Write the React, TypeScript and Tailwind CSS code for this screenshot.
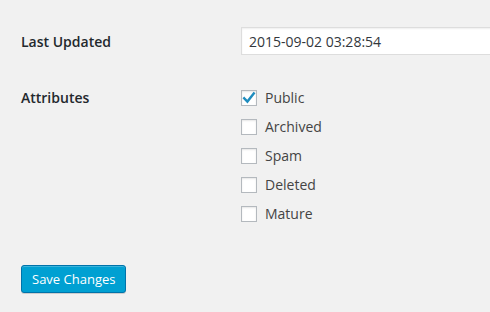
import { useState } from "react";

const attrs = [
  { name: "Public", checked: true },
  { name: "Archived", checked: false },
  { name: "Spam", checked: false },
  { name: "Deleted", checked: false },
  { name: "Mature", checked: false },
];

function Checkbox({ checked, onClick }: { checked: boolean; onClick: () => void }) {
  return (
    <span
      onClick={onClick}
      className="relative w-[16px] h-[16px] shrink-0 bg-white border border-[#b4b9be] shadow-[inset_0_1px_2px_rgba(0,0,0,0.1)] cursor-pointer"
    >
      {checked && (
        <svg viewBox="0 0 16 16" className="absolute left-[-1px] top-[-1px] w-[16px] h-[16px]">
          <path d="M3.2 8.2 L6.4 11.6 L12.8 3.4" fill="none" stroke="#1e8cbe" strokeWidth="2.4" strokeLinecap="square" />
        </svg>
      )}
    </span>
  );
}

export default function App() {
  const [items, setItems] = useState(attrs);

  return (
    <div className="w-[490px] h-[312px] overflow-hidden bg-[#f1f1f1] text-[#23282d] pt-[27px] pl-[21px] font-['Open_Sans',sans-serif] text-[14px]">
      {/* Last Updated */}
      <div className="flex items-center h-[28px]">
        <div className="w-[220px] shrink-0 font-semibold">Last Updated</div>
        <input
          type="text"
          defaultValue="2015-09-02 03:28:54"
          className="w-[320px] shrink-0 h-[28px] bg-white border border-[#ddd] shadow-[inset_0_1px_2px_rgba(0,0,0,0.07)] pl-[7px] text-[14px] text-[#32373c] outline-none"
        />
      </div>

      {/* Attributes */}
      <div className="flex mt-[35px]">
        <div className="w-[220px] shrink-0 font-semibold leading-[16px]">Attributes</div>
        <div className="flex flex-col gap-[13px]">
          {items.map((it, i) => (
            <label key={it.name} className="flex items-center gap-[8px] h-[16px] leading-[16px] text-[#444]">
              <Checkbox
                checked={it.checked}
                onClick={() =>
                  setItems(items.map((x, j) => (j === i ? { ...x, checked: !x.checked } : x)))
                }
              />
              {it.name}
            </label>
          ))}
        </div>
      </div>

      {/* Save */}
      <button className="mt-[43px] h-[28px] px-[10px] pb-[1px] rounded-[3px] bg-[#00a0d2] border border-[#0073aa] text-white text-[13px] leading-[26px] shadow-[inset_0_1px_0_rgba(120,200,230,0.5),0_1px_0_rgba(0,0,0,0.15)]">
        Save Changes
      </button>
    </div>
  );
}
